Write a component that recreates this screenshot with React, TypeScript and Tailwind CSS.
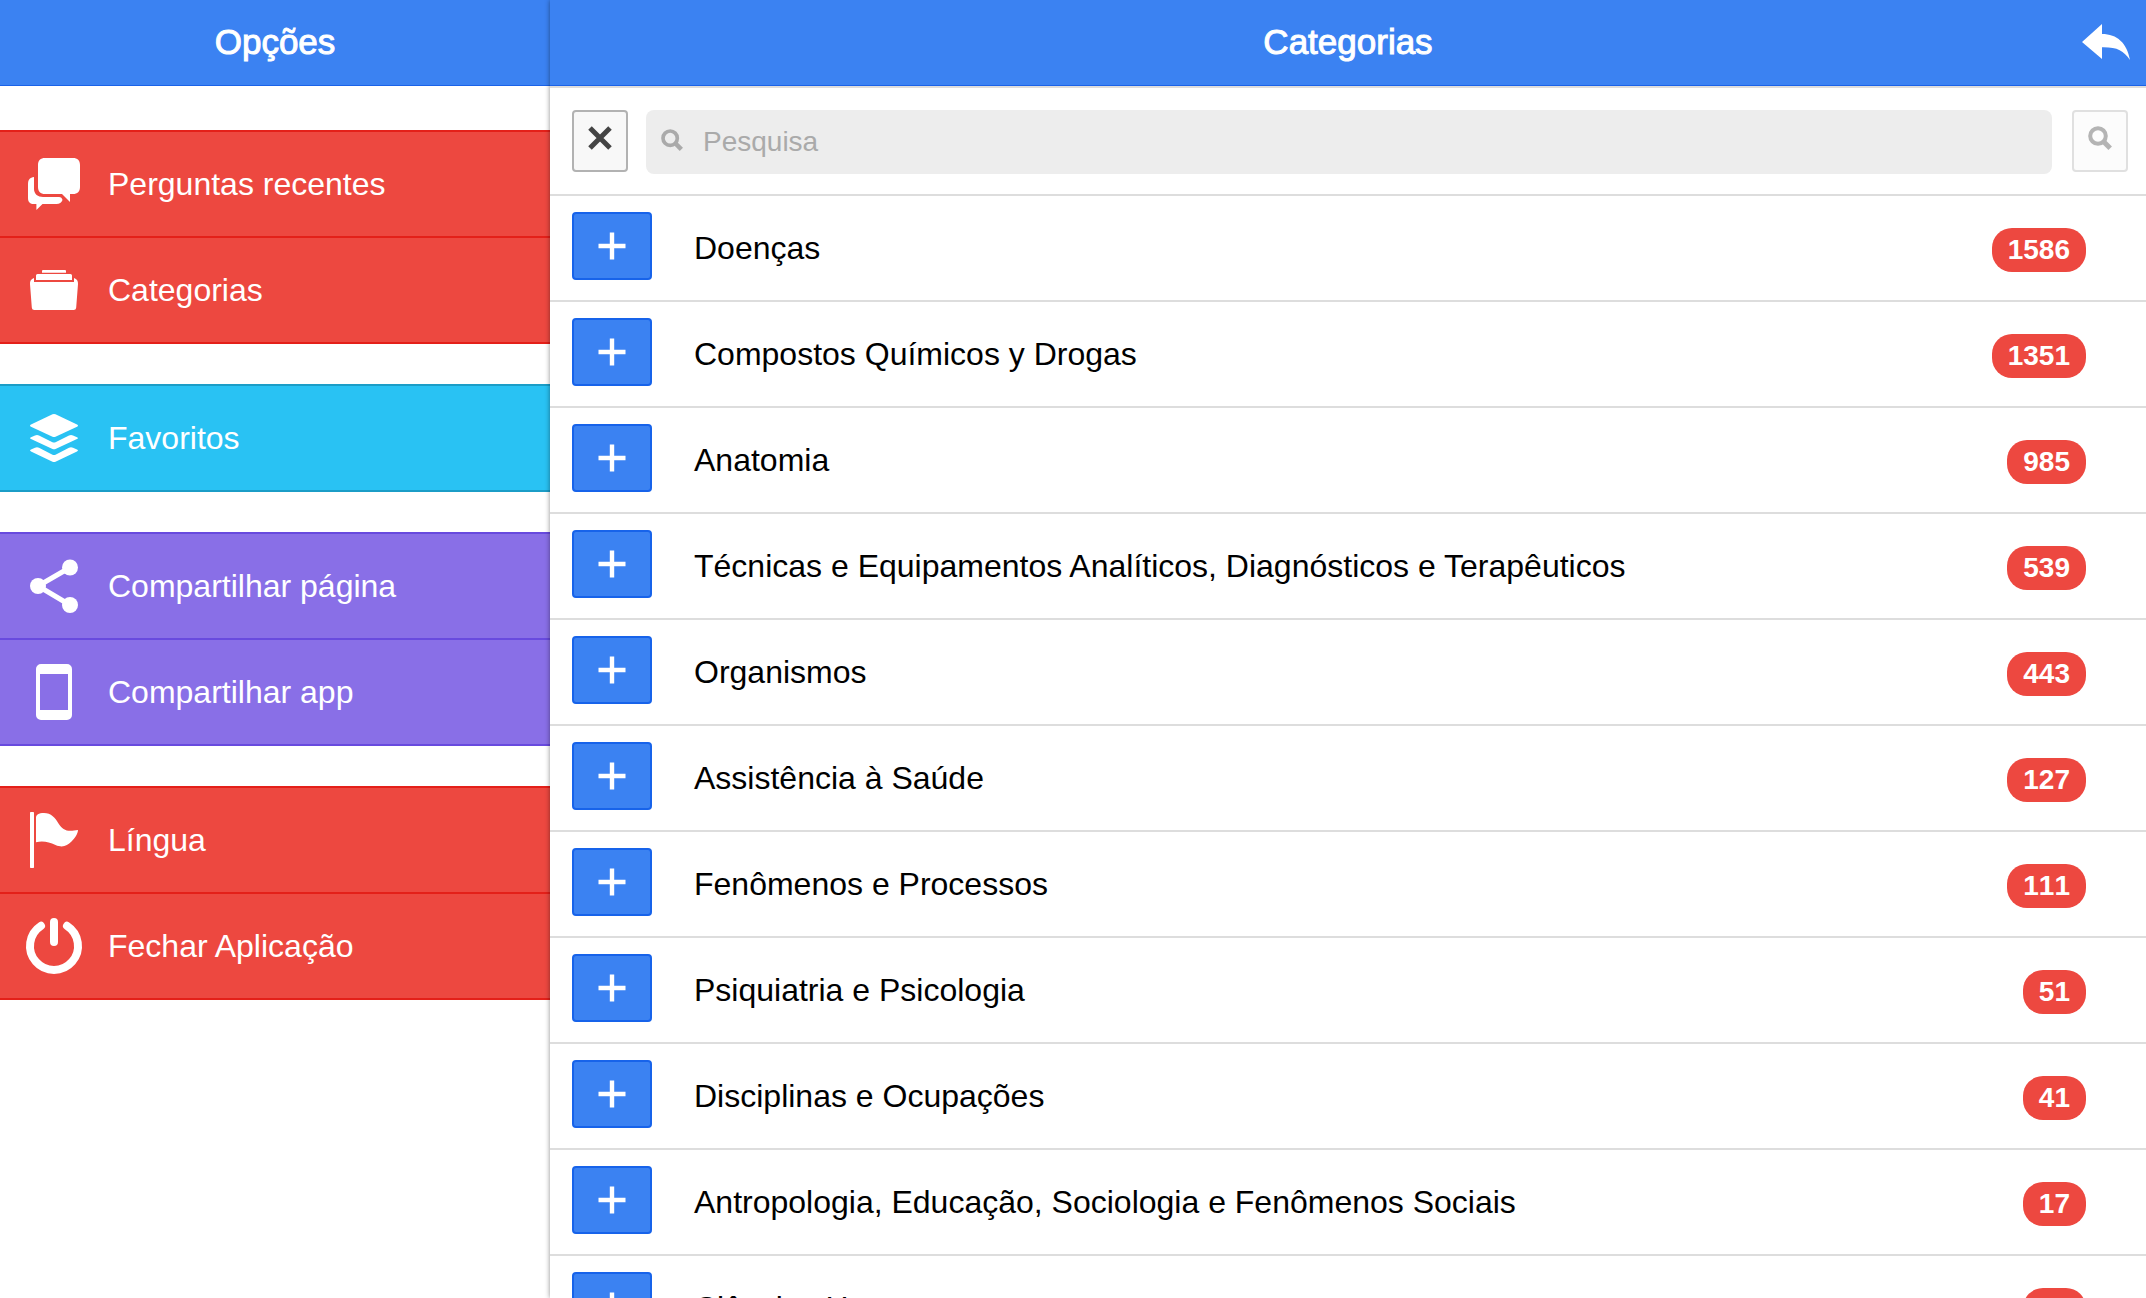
import React, { useState } from 'react';

type IconProps = { className?: string };

const iconClass = 'w-16 h-16 shrink-0 fill-current';

function ChatIcon() {
  return (
    <svg viewBox="0 0 64 64" className={iconClass} aria-hidden="true">
      <path d="M23 6h28c4.500 0 7 2.500 7 7v22c0 4.500-2.500 7-7 7h-3v8l-8-8H23c-4.500 0-7-2.500-7-7V13c0-4.500 2.500-7 7-7z" />
      <path d="M12 25v12c0 5 4 8 9 8h16c2 0 3 1 3.500 3-1 2.500-3 4-6 4H20.500L14.400 58v-6H12c-4 0-6-2-6-6V32c0-4.500 2-6.500 6-7z" />
    </svg>
  );
}

function FolderIcon() {
  return (
    <svg viewBox="0 0 64 64" className={iconClass} aria-hidden="true">
      <path d="M21 12h22a1 1 0 0 1 1 1v1.700H20V13a1 1 0 0 1 1-1z" />
      <path d="M15.500 16h33a1.500 1.500 0 0 1 1.500 1.500V22H14v-4.500a1.500 1.500 0 0 1 1.500-1.500z" />
      <path d="M12 20v4h40v-4c3 1 4.200 3 4 6l-1.800 23.500c-.2 1.700-1 2.500-2.700 2.500h-39c-1.700 0-2.500-.8-2.700-2.500L8 26c-.2-3 1-5 4-6z" />
    </svg>
  );
}

function LayersIcon() {
  return (
    <svg viewBox="0 0 64 64" className={iconClass} aria-hidden="true">
      <path d="M30.500 8.300q1.500-.6 3 0L55 18.500q2 1.200 0 2.300L33.500 30.700q-1.500.6-3 0L9 20.800q-2-1.100 0-2.300z" />
      <path d="M13 29.500q2-1 4 0l13.500 6.800q1.500.6 3 0L47 29.500q2-1 4 0l4 1.700q2 .8 0 1.900L33.500 43q-1.500.6-3 0L9 33.100q-2-1.100 0-1.900z" />
      <path d="M13 41.800q2-1 4 0l13.500 7q1.500.6 3 0l13.500-7q2-1 4 0l4 1.700q2 .8 0 1.900L33.500 55.700q-1.500.6-3 0L9 45.400q-2-1.100 0-1.900z" />
    </svg>
  );
}

function ShareIcon() {
  return (
    <svg viewBox="0 0 64 64" className={iconClass} aria-hidden="true">
      <path d="M48 13.500 16 32l32 19" fill="none" stroke="currentColor" strokeWidth="5" />
      <circle cx="48" cy="13.500" r="8" />
      <circle cx="16" cy="32" r="8" />
      <circle cx="48" cy="51" r="8" />
    </svg>
  );
}

function PhoneIcon() {
  return (
    <svg viewBox="0 0 64 64" className={iconClass} aria-hidden="true">
      <path fillRule="evenodd" d="M19 4h26a5 5 0 0 1 5 5v46a5 5 0 0 1-5 5H19a5 5 0 0 1-5-5V9a5 5 0 0 1 5-5zm-1 10v36h28V14z" />
    </svg>
  );
}

function FlagIcon() {
  return (
    <svg viewBox="0 0 64 64" className={iconClass} aria-hidden="true">
      <rect x="8" y="4" width="4" height="56" rx=".7" />
      <path d="M14 10c0-3.500 2.500-5 8-5 7 0 11.500 5 14.500 10.500C41 22.500 45 24 56 22c0 3-2.500 7.500-6.500 11.500-4.500 4.500-9 6.500-16 3.500-6.500-2.700-12-4.500-19.500-2.700z" />
    </svg>
  );
}

function PowerIcon() {
  return (
    <svg viewBox="0 0 64 64" className={iconClass} aria-hidden="true">
      <path d="M19 11.800a24 24 0 1 0 26 0M32 8v20" fill="none" stroke="currentColor" strokeWidth="8" strokeLinecap="round" />
    </svg>
  );
}

function ReplyIcon() {
  return (
    <svg viewBox="0 0 48 36" className="w-12 h-9 fill-current" aria-hidden="true">
      <path d="M0 18 20 0v10c15 0 25 9 28 26-6.500-9.500-13-13-28-12.700V35z" />
    </svg>
  );
}

function CloseIcon() {
  return (
    <svg viewBox="0 0 24 24" className="w-6 h-6" aria-hidden="true">
      <path d="M2 2l20 20M22 2 2 22" fill="none" stroke="currentColor" strokeWidth="5" />
    </svg>
  );
}

function SearchIcon({ className }: IconProps) {
  return (
    <svg viewBox="0 0 24 24" className={className} fill="none" stroke="currentColor" aria-hidden="true">
      <circle cx="10" cy="10" r="7.800" strokeWidth="4" />
      <path d="M15 15l7.200 7.200" strokeWidth="5" />
    </svg>
  );
}

function PlusIcon() {
  return (
    <svg viewBox="0 0 28 28" className="w-7 h-7" aria-hidden="true">
      <path d="M14 .5v27M.5 14h27" fill="none" stroke="currentColor" strokeWidth="4.400" />
    </svg>
  );
}

const menuGroups = [
  {
    style: 'bg-[#ed4840] border-[#e42019] divide-[#e42019]',
    items: [
      { label: 'Perguntas recentes', icon: <ChatIcon /> },
      { label: 'Categorias', icon: <FolderIcon /> },
    ],
  },
  {
    style: 'bg-[#29c2f3] border-[#1b9dc7] divide-[#1b9dc7]',
    items: [{ label: 'Favoritos', icon: <LayersIcon /> }],
  },
  {
    style: 'bg-[#896fe7] border-[#684ade] divide-[#684ade]',
    items: [
      { label: 'Compartilhar página', icon: <ShareIcon /> },
      { label: 'Compartilhar app', icon: <PhoneIcon /> },
    ],
  },
  {
    style: 'bg-[#ed4840] border-[#e42019] divide-[#e42019]',
    items: [
      { label: 'Língua', icon: <FlagIcon /> },
      { label: 'Fechar Aplicação', icon: <PowerIcon /> },
    ],
  },
];

const categories = [
  { name: 'Doenças', count: 1586 },
  { name: 'Compostos Químicos y Drogas', count: 1351 },
  { name: 'Anatomia', count: 985 },
  { name: 'Técnicas e Equipamentos Analíticos, Diagnósticos e Terapêuticos', count: 539 },
  { name: 'Organismos', count: 443 },
  { name: 'Assistência à Saúde', count: 127 },
  { name: 'Fenômenos e Processos', count: 111 },
  { name: 'Psiquiatria e Psicologia', count: 51 },
  { name: 'Disciplinas e Ocupações', count: 41 },
  { name: 'Antropologia, Educação, Sociologia e Fenômenos Sociais', count: 17 },
  { name: 'Ciências Humanas', count: 12 },
];

const titleClass = 'text-[35px] font-normal [-webkit-text-stroke:1px_white]';

function Sidebar() {
  return (
    <aside className="w-[550px] shrink-0">
      <header className="h-[86px] flex items-center justify-center bg-[#3b82f2] border-b border-[#1a62e8] text-white">
        <h1 className={titleClass}>Opções</h1>
      </header>
      <nav className="flex flex-col gap-10 pt-11">
        {menuGroups.map((group, i) => (
          <ul key={i} className={`border-y-2 divide-y-2 text-white ${group.style}`}>
            {group.items.map((item) => (
              <li key={item.label}>
                <a href="#" className="h-[104px] flex items-center gap-[22px] pl-[22px]">
                  {item.icon}
                  <span className="text-[32px]">{item.label}</span>
                </a>
              </li>
            ))}
          </ul>
        ))}
      </nav>
    </aside>
  );
}

function SearchBar() {
  const [query, setQuery] = useState('');

  return (
    <form className="flex items-start pt-[22px] pl-[22px] pr-[18px] h-[110px] border-y-2 border-[#dddddd]">
      <button
        type="button"
        aria-label="Limpar"
        onClick={() => setQuery('')}
        className="w-14 h-[62px] shrink-0 flex items-center justify-center pb-1.5 rounded border-2 border-[#b2b2b2] bg-[#f8f8f8] text-[#444444]"
      >
        <CloseIcon />
      </button>
      <label className="flex-1 h-16 ml-[18px] mr-5 pl-[15px] flex items-center gap-5 rounded-lg bg-[#ededed] text-[#aaaaaa]">
        <SearchIcon className="w-[22px] h-[22px] mb-1 shrink-0" />
        <input
          type="text"
          aria-label="Pesquisa"
          placeholder="Pesquisa"
          value={query}
          onChange={(e) => setQuery(e.target.value)}
          className="flex-1 h-full bg-transparent outline-none text-[28px] text-black placeholder:text-[#aaaaaa]"
        />
      </label>
      <button
        type="button"
        aria-label="Pesquisar"
        className="w-14 h-[62px] shrink-0 flex items-center justify-center pb-1.5 rounded border-2 border-[#e0e0e0] bg-[#fcfcfc] text-[#b4b4b4]"
      >
        <SearchIcon className="w-6 h-6" />
      </button>
    </form>
  );
}

export default function App() {
  return (
    <div className="h-screen flex overflow-hidden bg-white font-['Liberation_Sans',Arial,sans-serif]">
      <Sidebar />
      <main className="flex-1 relative bg-white shadow-[0_0_5px_rgba(0,0,0,0.45)]">
        <header className="h-[86px] relative flex items-center justify-center bg-[#3b82f2] border-b border-[#1a62e8] text-white">
          <h2 className={titleClass}>Categorias</h2>
          <button type="button" aria-label="Voltar" className="absolute right-4 top-6">
            <ReplyIcon />
          </button>
        </header>
        <SearchBar />
        <ul>
          {categories.map((category) => (
            <li key={category.name} className="h-[106px] flex items-start pt-4 pl-[22px] pr-[60px] border-b-2 border-[#dddddd]">
              <button
                type="button"
                aria-label={`Abrir ${category.name}`}
                className="w-20 h-[68px] shrink-0 flex items-center justify-center rounded border-2 border-[#1763ea] bg-[#3b82f2] text-white"
              >
                <PlusIcon />
              </button>
              <span className="flex-1 ml-[42px] text-[32px] leading-[72px] text-black">{category.name}</span>
              <span className="mt-4 h-11 px-4 rounded-[20px] bg-[#ed4840] text-white text-[28px] leading-[44px] font-bold [font-kerning:none]">
                {category.count}
              </span>
            </li>
          ))}
        </ul>
      </main>
    </div>
  );
}
